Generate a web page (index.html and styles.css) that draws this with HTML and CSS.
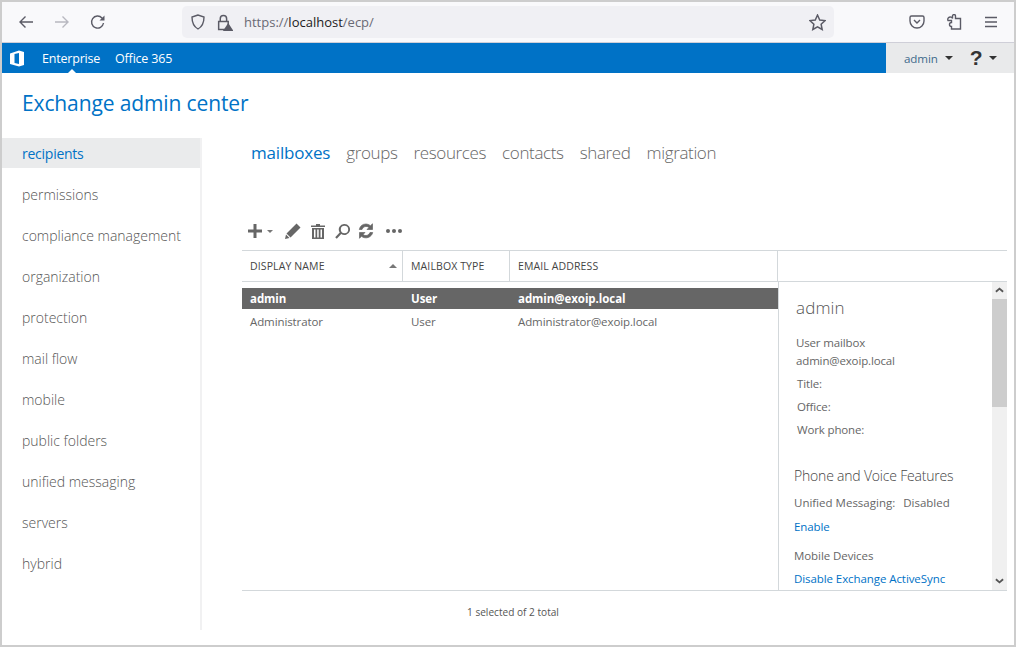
FILE: index.html
```html
<!DOCTYPE html>
<html lang="en">
<head>
<meta charset="utf-8">
<title>Exchange admin center</title>
<link rel="stylesheet" href="styles.css">
</head>
<body>
<div class="window">
  <div class="browser">
    <div class="nav-icons">
      <svg class="ic" viewBox="0 0 16 16"><path d="M15 8H2M7.5 2.5 2 8l5.500 5.500"/></svg>
      <svg class="ic dim" viewBox="0 0 16 16"><path d="M1 8h13M8.500 2.500 14 8l-5.500 5.500"/></svg>
      <svg class="ic" viewBox="0 0 16 16"><path d="M13.500 9a6 6 0 1 1-1.500-5l1.500 1.500"/><path class="fill" d="M14.500 1.500v5h-5z"/></svg>
    </div>
    <div class="urlbar">
      <svg class="ic shield" viewBox="0 0 16 16"><path d="M8 1 2 3c0 6 1.500 9.500 6 12 4.500-2.500 6-6 6-12z"/></svg>
      <svg class="ic lock" viewBox="0 0 16 16"><path d="M4 7V4.500a3 3 0 0 1 6 0V7M2.500 7h9v7.500h-9z"/><path class="warn" d="M11.500 8.500 16.500 16h-10z"/></svg>
      <span class="url">https://<b>localhost</b>/ecp/</span>
      <svg class="ic star" viewBox="0 0 16 16"><path d="m8 1 2.100 4.600 5 .6-3.700 3.400 1 5L8 12l-4.400 2.600 1-5L.9 6.200l5-.6z"/></svg>
    </div>
    <div class="tools">
      <svg class="ic" viewBox="0 0 16 16"><path d="M2.500 2h11A1.500 1.500 0 0 1 15 3.500V7a7 7 0 0 1-14 0V3.500A1.500 1.500 0 0 1 2.500 2zM5 6l3 3 3-3"/></svg>
      <svg class="ic" viewBox="0 0 16 16"><path d="M6 1.500a1.500 1.500 0 0 1 3 0V4h5v10.500H5V12a2 2 0 1 1 0-4V6H1.500a2 2 0 1 1 4.500-2z" transform="translate(.5 .5)"/></svg>
      <svg class="ic" viewBox="0 0 16 16"><path d="M2 3.500h12M2 8h12M2 12.500h12"/></svg>
    </div>
  </div>
  <header class="suitebar">
    <svg class="o365" viewBox="0 0 16 17"><path fill-rule="evenodd" d="M1 3.500 10 .5l5 1.500v13l-5 1.500-9-2.500zM10 3 5.500 4v9l4.500 1z"/></svg>
    <a class="suite-link current">Enterprise</a>
    <a class="suite-link">Office 365</a>
    <div class="suite-user">
      <span class="user-name">admin</span><i class="caret"></i>
      <span class="help">?</span><i class="caret"></i>
    </div>
  </header>
  <h1 class="title">Exchange admin center</h1>
  <div class="main">
    <nav class="side">
      <a class="side-item active">recipients</a>
      <a class="side-item">permissions</a>
      <a class="side-item">compliance management</a>
      <a class="side-item">organization</a>
      <a class="side-item">protection</a>
      <a class="side-item">mail flow</a>
      <a class="side-item">mobile</a>
      <a class="side-item">public folders</a>
      <a class="side-item">unified messaging</a>
      <a class="side-item">servers</a>
      <a class="side-item">hybrid</a>
    </nav>
    <section class="content">
      <div class="tabs">
        <a class="tab active">mailboxes</a>
        <a class="tab">groups</a>
        <a class="tab">resources</a>
        <a class="tab">contacts</a>
        <a class="tab">shared</a>
        <a class="tab">migration</a>
      </div>
      <div class="toolbar">
        <svg class="tool plus" viewBox="0 0 14 14"><path d="M0 5.500h5.500V0h3v5.500H14v3H8.500V14h-3V8.500H0z"/></svg>
        <i class="mini-caret"></i>
        <svg class="tool pencil" viewBox="0 0 16 16"><path d="M11.500.5 15.500 4.500 5.500 14.500 1.500 10.500zM1 11.500l3.500 3.500L0 16z"/></svg>
        <svg class="tool trash" viewBox="0 0 14 15"><path fill-rule="evenodd" d="M5 0h4v1.500h5V3H0V1.500h5zM1 4h12v11H1zM3 5.500V13.500h1.500V5.500zM6.200 5.500V13.500h1.500V5.500zM9.500 5.500V13.500H11V5.500z"/></svg>
        <svg class="tool search" viewBox="0 0 15 15"><path fill-rule="evenodd" d="M9.500 0a5.500 5.500 0 1 1-3.300 9.900L1.800 14.800.2 13.300l4.500-4.800A5.500 5.500 0 0 1 9.500 0zm0 1.800a3.700 3.700 0 1 0 0 7.400 3.700 3.700 0 0 0 0-7.400z"/></svg>
        <svg class="tool refresh" viewBox="0 0 16 16"><path d="M8 1a7 7 0 0 1 4.500 1.700L14.500.8V6.500H9l2-2A4.300 4.300 0 0 0 4 6.500H1.300A7 7 0 0 1 8 1zM1.500 9.500H7l-2 2a4.300 4.300 0 0 0 7-2h2.700A7 7 0 0 1 3.500 13.300l-2 2z"/></svg>
        <span class="dots"><i></i><i></i><i></i></span>
      </div>
      <div class="grid-head">
        <div class="col col-name">DISPLAY NAME<i class="sort"></i></div>
        <div class="col col-type">MAILBOX TYPE</div>
        <div class="col col-mail">EMAIL ADDRESS</div>
      </div>
      <div class="grid-body">
        <div class="rows">
          <div class="row selected"><span class="c-name">admin</span><span class="c-type">User</span><span>admin@exoip.local</span></div>
          <div class="row"><span class="c-name">Administrator</span><span class="c-type">User</span><span>Administrator@exoip.local</span></div>
        </div>
        <aside class="details">
          <div class="detail-text">
            <h2 class="d-name">admin</h2>
            <p class="d-line first">User mailbox</p>
            <p class="d-line">admin@exoip.local</p>
            <p class="d-line gap">Title:</p>
            <p class="d-line gap">Office:</p>
            <p class="d-line gap">Work phone:</p>
            <h3 class="d-head">Phone and Voice Features</h3>
            <p class="d-sub um"><span>Unified Messaging:</span><span>Disabled</span></p>
            <a class="d-link">Enable</a>
            <p class="d-sub mobile">Mobile Devices</p>
            <a class="d-link last">Disable Exchange ActiveSync</a>
          </div>
          <div class="scrollbar">
            <svg class="chev" viewBox="0 0 10 6"><path d="M1 5l4-3.500L9 5"/></svg>
            <div class="thumb"></div>
            <div class="track"></div>
            <svg class="chev" viewBox="0 0 10 6"><path d="M1 1l4 3.500L9 1"/></svg>
          </div>
        </aside>
      </div>
      <div class="status">1 selected of 2 total</div>
    </section>
  </div>
</div>
</body>
</html>
```
FILE: styles.css
```css
* { box-sizing: border-box; }
html, body { margin: 0; height: 100%; }
body { background: #cdcdcd; padding: 2px; font-family: "Noto Sans", "Open Sans", sans-serif; overflow: hidden; }
.window { width: 1012px; height: 643px; background: #fff; display: flex; flex-direction: column; position: relative; }
.browser { height: 41px; background: #f9f9fb; border-bottom: 1px solid #cfcfd8; display: flex; align-items: center; flex: none; }
.ic { width: 16px; height: 16px; fill: none; stroke: #5b5b66; stroke-width: 1.4; flex: none; }
.ic .fill { fill: #5b5b66; stroke: none; }
.ic.dim { stroke: #b8b8c0; }
.nav-icons { display: flex; gap: 20px; padding-left: 16px; width: 180px; }
.urlbar { width: 652px; height: 32px; background: #f0f0f4; border-radius: 5px; display: flex; align-items: center; padding: 0 8px; }
.shield { margin-left: 0; }
.lock { margin-left: 10px; width: 17px; height: 17px; }
.lock .warn { fill: #5b5b66; stroke: none; }
.url { margin-left: 11px; font-size: 13px; color: #6a6a74; flex: 1; font-family: "Open Sans", sans-serif; }
.url b { font-weight: 400; color: #1c1b22; }
.star { width: 17px; height: 17px; }
.tools { display: flex; gap: 21px; margin-left: 75px; }
.suitebar { height: 30px; background: #0072c6; display: flex; align-items: center; flex: none; position: relative; }
.o365 { width: 16px; height: 17px; fill: #fff; margin-left: 7px; }
.suite-link { color: #fff; font-size: 12.500px; margin-left: 17px; font-family: "Open Sans", sans-serif; letter-spacing: -.2px; position: relative; }
.suite-link + .suite-link { margin-left: 15px; }
.suite-link.current::after { content: ""; position: absolute; left: 25px; top: 19px; border: 5px solid transparent; border-top: 0; border-bottom-color: #fff; }
.suite-user { margin-left: auto; width: 128px; height: 30px; background: #e9eaeb; display: flex; align-items: center; padding-left: 18px; }
.user-name { font-size: 11.600px; color: #3f6b8c; font-family: "Open Sans", sans-serif; letter-spacing: -.1px; }
.caret { width: 0; height: 0; border: 4px solid transparent; border-top-color: #333; border-bottom: 0; margin-left: 7px; }
.help { font: 700 21px "Liberation Sans", sans-serif; color: #333; margin-left: 17px; width: 12px; }
.title { margin: 16px 0 0 20px; height: 49px; font-size: 21px; line-height: 28px; font-weight: 400; color: #0072c6; font-family: "Open Sans", sans-serif; letter-spacing: -.12px; flex: none; }
.main { display: flex; flex: 1; min-height: 0; }
.side { width: 200px; height: 492px; flex: none; display: flex; flex-direction: column; border-right: 2px solid #f1f1f2; }
.side-item { height: 30px; line-height: 30px; padding: 1px 0 0 20px; margin-bottom: 11px; font-size: 14px; font-weight: 300; color: #555; font-family: "Open Sans", sans-serif; letter-spacing: 0; flex: none; }
.side-item.active { background: #eaebec; color: #0072c6; font-weight: 400; letter-spacing: -.25px; }
.content { flex: 1; padding-left: 40px; padding-right: 7px; min-width: 0; display: flex; flex-direction: column; }
.tabs { display: flex; gap: 16px; height: 28px; padding-left: 9px; align-items: center; }
.tab { font-size: 17px; font-weight: 300; color: #666; font-family: "Open Sans", sans-serif; letter-spacing: -.36px; }
.tab.active { color: #0072c6; font-weight: 400; letter-spacing: -.2px; }
.toolbar { height: 38px; margin-top: 46px; display: flex; align-items: center; padding-left: 6px; }
.tool { fill: #666; flex: none; }
.plus { width: 14px; height: 14px; }
.mini-caret { width: 0; height: 0; border: 3.500px solid transparent; border-top-color: #777; border-bottom: 0; margin-left: 5px; }
.pencil { width: 16px; height: 16px; margin-left: 12px; }
.trash { width: 14px; height: 15px; margin-left: 10px; }
.search { width: 15px; height: 15px; margin-left: 10px; }
.refresh { width: 16px; height: 16px; margin-left: 8px; stroke: #666; stroke-width: .7; }
.dots { display: flex; gap: 2px; margin-left: 12px; }
.dots i { width: 4px; height: 4px; border-radius: 50%; background: #666; }
.grid-head { height: 32px; border-top: 1px solid #d3d8db; border-bottom: 1px solid #d3d8db; display: flex; flex: none; font-family: "Open Sans", sans-serif; }
.col { font-size: 10.500px; color: #444; line-height: 30px; padding-left: 8px; border-right: 1px solid #d3d8db; letter-spacing: .12px; position: relative; }
.col-name { width: 161px; }
.col-type { width: 107px; }
.col-mail { width: 268px; }
.sort { position: absolute; right: 5px; top: 13px; border: 4px solid transparent; border-top: 0; border-bottom-color: #777; }
.grid-body { height: 309px; border-bottom: 1px solid #d3d8db; display: flex; flex: none; font-family: "Open Sans", sans-serif; }
.rows { width: 536px; padding-top: 6px; flex: none; }
.row { height: 22px; line-height: 22px; margin-bottom: 1px; display: flex; padding-left: 8px; font-size: 11.500px; color: #666; letter-spacing: -.1px; }
.row.selected { background: #666; color: #fff; font-weight: 700; height: 21px; margin-bottom: 2px; letter-spacing: -.06px; }
.c-name { width: 161px; }
.c-type { width: 107px; }
.details { flex: 1; display: flex; min-width: 0; border-left: 1px solid #d3d8db; }
.detail-text { flex: 1; overflow: hidden; padding-left: 16px; font-size: 11.500px; color: #666; letter-spacing: -.15px; }
.d-name { margin: 13px 0 0 1px; font-size: 17px; line-height: 25px; font-weight: 300; color: #555; letter-spacing: .15px; }
.d-line { margin: 0 0 0 1px; line-height: 18px; height: 18px; }
.d-line.first { margin-top: 14px; }
.d-line.gap { margin-top: 5px; margin-left: 2px; }
.d-head { margin: 27px 0 0 -1px; font-size: 14px; line-height: 20px; font-weight: 300; color: #444; letter-spacing: -.2px; }
.d-sub { margin: 8px 0 0 -1px; line-height: 18px; letter-spacing: -.08px; }
.d-sub.um { display: flex; gap: 8px; letter-spacing: 0; }
.d-link { display: block; margin: 6px 0 0 -1px; line-height: 18px; color: #0072c6; letter-spacing: -.08px; }
.d-sub.mobile { margin-top: 11px; }
.d-link.last { margin-top: 5px; white-space: nowrap; }
.scrollbar { width: 15px; flex: none; background: #f0f0f0; display: flex; flex-direction: column; }
.chev { width: 9px; height: 6px; margin: 5px 3px 6px; fill: none; stroke: #555; stroke-width: 2; flex: none; }
.thumb { height: 108px; background: #cdcdcd; flex: none; }
.track { flex: 1; }
.status { font-size: 10.100px; color: #555; margin-top: 13px; padding-left: 225px; line-height: 16px; font-family: "Open Sans", sans-serif; }
```
